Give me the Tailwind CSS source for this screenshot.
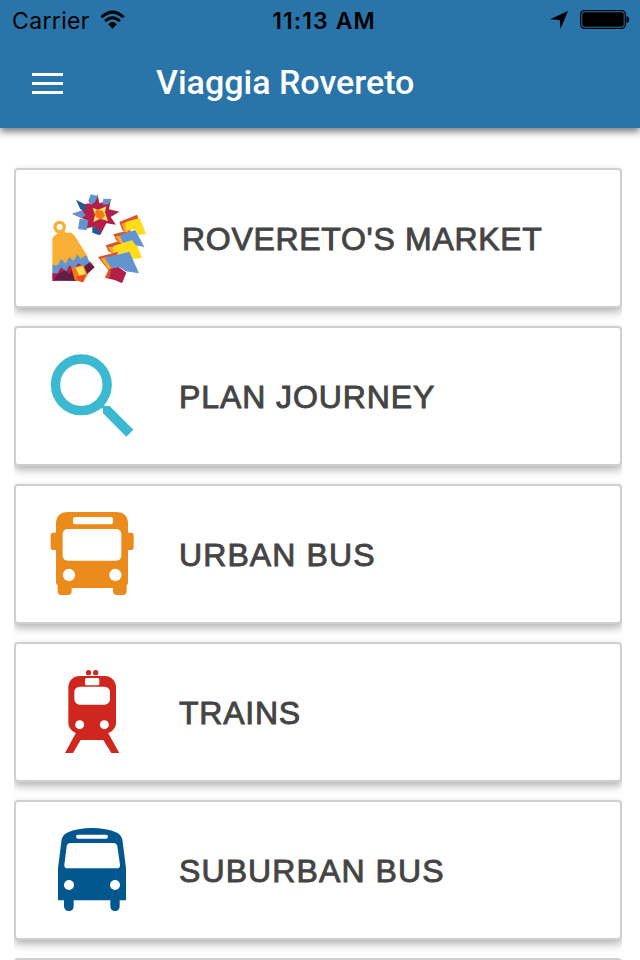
<!DOCTYPE html>
<html lang="en">
<head>
<meta charset="utf-8">
<title>Viaggia Rovereto</title>
<script src="https://cdn.jsdelivr.net/npm/@tailwindcss/browser@4"></script>
</head>
<body class="bg-white h-[960px] w-[640px] overflow-hidden font-['Liberation_Sans',sans-serif]">
<header class="relative z-10 h-32 bg-[#2975a9] shadow-[0_4px_7px_rgba(0,0,0,0.5)]">
  <div class="flex h-10 items-center justify-between pl-3 pr-[11px] text-black font-[Inter,sans-serif]">
    <div class="flex w-[180px] items-center">
      <span class="pt-0.5 text-[23px] leading-[38px] tracking-[0.35px]">Carrier</span>
      <svg class="ml-[10px]" width="25" height="20" viewBox="0 0 26 20" fill="none" stroke="#000" stroke-width="3"><path d="M1.4 7.2Q13-3.6 24.6 7.2M5.3 11.2Q13 4 20.7 11.2"/><path d="M8.500 14.300Q13 10.100 17.500 14.300L13 19z" fill="#000" stroke="none"/></svg>
    </div>
    <span class="ml-[7px] pt-0.5 text-[23px] font-semibold leading-[38px] tracking-[1.1px]">11:13 AM</span>
    <div class="flex w-[180px] items-center justify-end">
      <svg width="79" height="20" viewBox="550 11 79 20"><path d="M568 12L550 20.2L559.7 21L560.5 30z"/><rect x="580.7" y="11.7" width="44.6" height="17.6" rx="3.5" fill="none" stroke="#000" stroke-width="1.3"/><rect x="582.3" y="13.2" width="41.4" height="14.6" rx="2"/><path d="M626.5 17Q629 17.5 629 20.5T626.5 24z"/></svg>
    </div>
  </div>
  <div class="flex h-[86px] items-center pl-8">
    <div class="flex w-[31px] flex-col gap-1.5">
      <i class="h-[3px] bg-white"></i><i class="h-[3px] bg-white"></i><i class="h-[3px] bg-white"></i>
    </div>
    <h1 class="ml-[93px] pb-0.5 font-[Roboto,sans-serif] text-[34px] font-medium leading-10 text-white">Viaggia Rovereto</h1>
  </div>
</header>
<main class="ml-3.5 flex h-[832px] w-[608px] flex-col gap-[18px] overflow-hidden pt-10 text-[32px] tracking-[0.75px] text-[#444] [-webkit-text-stroke:0.9px_#444]">
  <a class="flex h-[140px] shrink-0 items-center rounded-[4px] border-2 border-[#cfcfcf] bg-white pl-6 shadow-[0_4px_8px_rgba(0,0,0,0.3)]">
    <svg width="120" height="110" viewBox="0 -6 360 330">
      <path fill="#b31f48" d="M130 58L150 55L173 29L178 55L212 45L207 73L238 80L212 96L228 119L199 115L181 150L162 125L130 132L138 105L98 87L127 78L110 47z"/>
      <path fill="#6295cf" d="M152 28L174 33L165 51L153 60L145 48zM190 41L215 42L205 58L188 60zM96 86L126 76L137 91L125 99zM119 101L145 105L140 136L114 132z"/>
      <path fill="#245c91" d="M108 44L133 57L140 76L121 73zM157 123L182 137L179 151L157 143z"/>
      <path fill="#ffe05a" d="M158 69L175 74L199 64L195 82L204 108L181 101L160 111L165 89z"/>
      <path fill="#f47a16" d="M169 74L188 77L195 92L184 104L168 97L164 86z"/>
      <circle cx="59" cy="126" r="14" fill="none" stroke="#f8b034" stroke-width="10"/>
      <path fill="#f8b034" d="M48 139H74L79 144Q94 139 103 151L144 216L134 244L37 249V162Q40 151 52 147z"/>
      <path fill="#6295cf" d="M37 240L53 241L63 221L77 236L88 216L101 228L112 208L122 221L137 211L151 233L145 261L37 281z"/>
      <path fill="#b31f48" d="M37 265L53 265L63 247L78 260L88 241L102 253L115 235L130 245L151 230L164 247L140 269L125 286L37 288z"/>
      <path fill="#631c42" d="M41 286L53 268L74 256L88 268L97 253L108 288zM132 248L146 234L163 247L139 268z"/>
      <path fill="#f47a16" d="M94 248L130 240L143 269L129 292L104 285z"/>
      <path fill="#ffe05a" d="M107 248L128 242L138 268L118 273z"/>
      <path fill="#f04c23" d="M111 274L138 268L129 292L110 286z"/>
      <path fill="#d9532b" d="M238 111L291 89L295 101L249 118L258 144L247 135zM220 148L272 134L270 143L235 156L240 174L229 166zM197 181L249 165L246 176L214 190L218 207L205 198z"/>
      <path fill="#ffaa20" d="M245 116L259 112L265 143L253 140zM226 154L244 152L248 177L238 171zM204 187L219 185L226 209L214 204z"/>
      <path fill="#ffdc19" d="M257 111L299 99L318 147L295 150L285 133L259 137zM220 183L284 163L306 218L276 223L264 202L222 209z"/>
      <path fill="#6295cf" d="M239 150L286 135L313 186L287 181L276 166L249 174z"/>
      <path fill="#d9532b" d="M174 216L235 200L231 211L193 225L215 254L209 260z"/>
      <path fill="#ffaa20" d="M183 221L203 215L219 249L208 257z"/>
      <path fill="#6295cf" d="M193 218L268 200L297 265L257 259L239 246L216 251z"/>
      <path fill="#b31f48" d="M208 252L236 246L259 263L246 295L226 286L196 278z"/>
      <path fill="#d9532b" d="M208 252L214 254L207 281L195 277z"/>
    </svg>
    <span class="ml-[22px] pt-0.5 tracking-[0.7px]">ROVERETO'S MARKET</span>
  </a>
  <a class="flex h-[140px] shrink-0 items-center rounded-[4px] border-2 border-[#cfcfcf] bg-white pl-6 shadow-[0_4px_8px_rgba(0,0,0,0.3)]">
    <svg width="120" height="110" viewBox="0 -12 360 330"><circle cx="124" cy="119.500" r="77.500" fill="none" stroke="#3bb9d0" stroke-width="28"/><path fill="#3bb9d0" d="M180 187L190 177L195 183H209L280 254L259 275L189 205V189L185 192z"/></svg>
    <span class="ml-[19px] pt-0.5 tracking-[0.9px]">PLAN JOURNEY</span>
  </a>
  <a class="flex h-[140px] shrink-0 items-center rounded-[4px] border-2 border-[#cfcfcf] bg-white pl-6 shadow-[0_4px_8px_rgba(0,0,0,0.3)]">
    <svg width="120" height="110" viewBox="0 -3 360 330"><path fill="#eb8b1b" d="M48 98V70Q49 37 84 36H228Q263 37 264 70V98H274Q281 98 281 105V143Q281 150 274 150H264V248Q264 253 260 256V274Q260 285 249 285H230Q219 285 219 274V264H95V274Q95 285 84 285H63Q53 285 53 274V256Q48 253 48 248V150H39Q32 150 32 143V105Q32 98 39 98z"/><g fill="#fff"><rect x="99" y="51" width="120" height="22" rx="6"/><rect x="68" y="87" width="176" height="95" rx="15"/><circle cx="87" cy="225" r="18.500"/><circle cx="226" cy="225" r="18.500"/></g></svg>
    <span class="ml-[19px] pt-0.5 tracking-[1.1px]">URBAN BUS</span>
  </a>
  <a class="flex h-[140px] shrink-0 items-center rounded-[4px] border-2 border-[#cfcfcf] bg-white pl-6 shadow-[0_4px_8px_rgba(0,0,0,0.3)]">
    <svg width="120" height="110" viewBox="-30 -9 360 330"><g fill="#cf261e"><circle cx="115.500" cy="38" r="8"/><circle cx="137" cy="38" r="8"/><rect x="55" y="48" width="143" height="173" rx="34"/><path d="M78 218L45 279H69L92 240H160L184 279H208L174 218z"/></g><g fill="#fff"><rect x="105" y="54" width="43" height="22" rx="5"/><rect x="73" y="80" width="107" height="54" rx="16"/><circle cx="89" cy="194" r="13.500"/><circle cx="163" cy="194" r="13.500"/></g></svg>
    <span class="ml-[19px] pt-0.5">TRAINS</span>
  </a>
  <a class="flex h-[140px] shrink-0 items-center rounded-[4px] border-2 border-[#cfcfcf] bg-white pl-6 shadow-[0_4px_8px_rgba(0,0,0,0.3)]">
    <svg width="120" height="110" viewBox="-15 -15 360 330"><path fill="#03578f" d="M39 241V145L49 65Q50 46 66 38Q98 24 141 24T216 38Q231 45 233 65L243 145V241H224V259Q224 273 210 273T196 259V241H86V259Q86 273 72 273T57 259V241z"/><g fill="#fff"><rect x="93" y="44" width="96" height="12" rx="6"/><path d="M77 69H204Q215 69 217 79L225 134Q226 145 215 145H68Q57 145 58 134L65 79Q67 69 77 69z"/><circle cx="72" cy="195" r="15"/><circle cx="210" cy="195" r="15"/></g></svg>
    <span class="ml-[19px] pt-0.5 tracking-[1.1px]">SUBURBAN BUS</span>
  </a>
  <a class="h-[140px] shrink-0 rounded-[4px] border-2 border-[#cfcfcf] bg-white"></a>
</main>
</body>
</html>
